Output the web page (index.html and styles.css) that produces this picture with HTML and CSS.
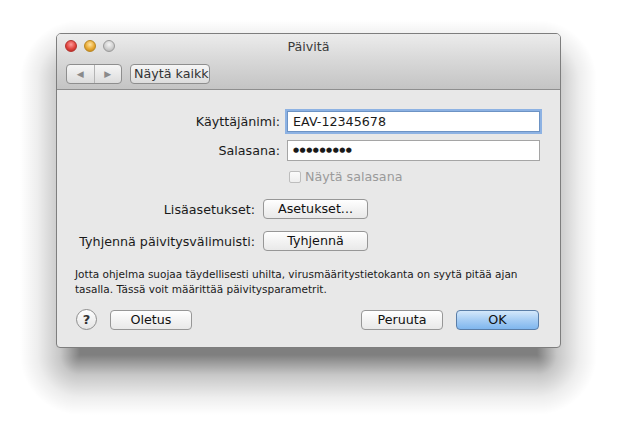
FILE: index.html
```html
<!DOCTYPE html>
<html>
<head>
  <title>Päivitä</title>
  <link rel="stylesheet" href="styles.css">
</head>
<body>
  <div class="desk">
  <div class="window">
    <div class="titlebar">
      <div class="lights">
        <span class="light red"></span>
        <span class="light yellow"></span>
        <span class="light green"></span>
      </div>
      <div class="title">Päivitä</div>
      <div class="toolbar">
        <div class="nav">
          <span class="navbtn">&#9664;</span>
          <span class="navbtn">&#9654;</span>
        </div>
        <div class="showall">Näytä kaikk</div>
      </div>
    </div>

    <div class="content">
      <div class="login">
        <label class="lbl">Käyttäjänimi:</label>
        <div class="field focus">EAV-12345678</div>
        <label class="lbl">Salasana:</label>
        <div class="field dots">●●●●●●●●●</div>
        <span></span>
        <div class="check"><span class="box"></span>Näytä salasana</div>
      </div>

      <div class="advanced">
        <span class="lbl">Lisäasetukset:</span>
        <div class="btn wide">Asetukset...</div>
        <span class="lbl">Tyhjennä päivitysvälimuisti:</span>
        <div class="btn wide">Tyhjennä</div>
      </div>

      <p class="note">Jotta ohjelma suojaa täydellisesti uhilta, virusmääritystietokanta on syytä pitää ajan tasalla. Tässä voit määrittää päivitysparametrit.</p>

      <div class="footer">
        <div class="help">?</div>
        <div class="btn">Oletus</div>
        <div class="spacer"></div>
        <div class="btn">Peruuta</div>
        <div class="btn ok">OK</div>
      </div>
    </div>
  </div>
  </div>
</body>
</html>
```

FILE: styles.css
```css
body {
  margin: 0;
  background: #ffffff;
  font-family: "DejaVu Sans", "Liberation Sans", sans-serif;
  font-size: 12.7px;
  color: #1a1a1a;
}

/* desktop area; the window shadow is a 9-slice of gradients */
.desk {
  width: 617px;
  height: 427px;
  box-sizing: border-box;
  padding: 33px 56px 79px;
  background:
    radial-gradient(circle at 100% 100%, rgba(0,0,0,.5), rgba(0,0,0,.22) 20px, rgba(0,0,0,.07) 42px, rgba(0,0,0,0) 60px) 20px 20px / 60px 60px no-repeat,
    radial-gradient(circle at 0 100%, rgba(0,0,0,.5), rgba(0,0,0,.22) 20px, rgba(0,0,0,.07) 42px, rgba(0,0,0,0) 60px) 537px 20px / 60px 60px no-repeat,
    radial-gradient(circle at 100% 0, rgba(0,0,0,.5), rgba(0,0,0,.22) 20px, rgba(0,0,0,.07) 42px, rgba(0,0,0,0) 60px) 20px 355px / 60px 60px no-repeat,
    radial-gradient(circle at 0 0, rgba(0,0,0,.5), rgba(0,0,0,.22) 20px, rgba(0,0,0,.07) 42px, rgba(0,0,0,0) 60px) 537px 355px / 60px 60px no-repeat,
    linear-gradient(to top, rgba(0,0,0,.5), rgba(0,0,0,.22) 33%, rgba(0,0,0,.07) 70%, rgba(0,0,0,0)) 80px 20px / 457px 60px no-repeat,
    linear-gradient(to bottom, rgba(0,0,0,.5), rgba(0,0,0,.22) 33%, rgba(0,0,0,.07) 70%, rgba(0,0,0,0)) 80px 355px / 457px 60px no-repeat,
    linear-gradient(to left, rgba(0,0,0,.5), rgba(0,0,0,.22) 33%, rgba(0,0,0,.07) 70%, rgba(0,0,0,0)) 20px 80px / 60px 275px no-repeat,
    linear-gradient(to right, rgba(0,0,0,.5), rgba(0,0,0,.22) 33%, rgba(0,0,0,.07) 70%, rgba(0,0,0,0)) 537px 80px / 60px 275px no-repeat,
    linear-gradient(rgba(0,0,0,.5), rgba(0,0,0,.5)) 80px 80px / 457px 275px no-repeat,
    #ffffff;
}

.window {
  width: 505px;
  height: 315px;
  box-sizing: border-box;
  border: 1px solid #7e7e7e;
  border-radius: 5px 5px 4px 4px;
  background: #e8e8e8;
  overflow: hidden;
  display: flex;
  flex-direction: column;
}

.titlebar {
  position: relative;
  height: 55px;
  background: linear-gradient(#ececec, #d9d9d9 45%, #c4c4c4);
  border-bottom: 1px solid #8e8e8e;
}

.lights {
  position: absolute;
  left: 8px;
  top: 6px;
  display: flex;
  gap: 7px;
}
.light {
  width: 12px;
  height: 12px;
  border-radius: 50%;
  box-sizing: border-box;
}
.red {
  background: radial-gradient(circle at 50% 35%, #ff9a9a, #e0443e 55%, #a8221c);
  border: 1px solid #b3312c;
}
.yellow {
  background: radial-gradient(circle at 50% 35%, #ffe4a0, #e8a832 55%, #b87a12);
  border: 1px solid #b88722;
}
.green {
  background: radial-gradient(circle at 50% 35%, #f4f4f4, #cfcfcf 55%, #a8a8a8);
  border: 1px solid #9a9a9a;
}

.title {
  text-align: center;
  padding-top: 5px;
  font-size: 12.7px;
  color: #3a3a3a;
}

.toolbar {
  display: flex;
  gap: 8px;
  padding: 10px 0 0 9px;
}
.nav {
  display: flex;
  width: 56px;
  height: 20px;
  box-sizing: border-box;
  border: 1px solid #8e8e8e;
  border-radius: 4px;
  background: linear-gradient(#f6f6f6, #dcdcdc);
}
.navbtn {
  flex: 1;
  text-align: center;
  font-size: 9px;
  line-height: 18px;
  color: #8a8a8a;
}
.navbtn + .navbtn {
  border-left: 1px solid #b4b4b4;
}
.showall {
  width: 80px;
  height: 20px;
  box-sizing: border-box;
  border: 1px solid #8e8e8e;
  border-radius: 4px;
  background: linear-gradient(#f6f6f6, #dcdcdc);
  line-height: 18px;
  padding-left: 3px;
  overflow: hidden;
  white-space: nowrap;
  color: #333333;
}

.content {
  flex: 1;
  display: flex;
  flex-direction: column;
}

.login {
  display: grid;
  grid-template-columns: 223px 253px;
  column-gap: 7px;
  row-gap: 8px;
  align-items: center;
  margin-top: 21px;
}
.lbl {
  text-align: right;
  white-space: nowrap;
}
.field {
  height: 21px;
  box-sizing: border-box;
  border: 1px solid #a5a5a5;
  background: #ffffff;
  padding-left: 5px;
  line-height: 19px;
}
.field.focus {
  border-color: #6d93c4;
  box-shadow: 0 0 0 2px #8db2e3;
}
.field.dots {
  font-size: 7px;
  letter-spacing: 0.5px;
  line-height: 19px;
}
.check {
  display: flex;
  align-items: center;
  gap: 4px;
  color: #9a9a9a;
}
.box {
  width: 12px;
  height: 12px;
  box-sizing: border-box;
  border: 1px solid #bdbdbd;
  border-radius: 2px;
  background: linear-gradient(#fbfbfb, #eeeeee);
  margin-left: 2px;
}

.advanced {
  display: grid;
  grid-template-columns: 198px 105px;
  column-gap: 8px;
  row-gap: 12px;
  align-items: center;
  margin-top: 15px;
}

.btn {
  height: 20px;
  width: 82px;
  box-sizing: border-box;
  border: 1px solid #979797;
  border-radius: 4px;
  background: linear-gradient(#ffffff, #f3f3f3 50%, #e9e9e9);
  text-align: center;
  line-height: 18px;
  color: #111111;
}
.btn.wide {
  width: 105px;
}
.btn.ok {
  width: 83px;
  border-color: #5a7ea8;
  background: linear-gradient(#d4e8fb, #a6cdf4 50%, #7fb6ee);
}

.note {
  margin: 16px 38px 0 18px;
  font-size: 10.5px;
  line-height: 15px;
}

.footer {
  display: flex;
  align-items: center;
  gap: 12px;
  margin: 12px 21px 0 19px;
}
.footer .ok {
  margin-left: 1px;
}
.spacer {
  flex: 1;
}
.help {
  width: 21px;
  height: 21px;
  box-sizing: border-box;
  border: 1px solid #8e8e8e;
  border-radius: 50%;
  background: linear-gradient(#ffffff, #e4e4e4);
  text-align: center;
  line-height: 19px;
  font-weight: bold;
  font-size: 13px;
  color: #333333;
  margin-right: 1px;
}
```
